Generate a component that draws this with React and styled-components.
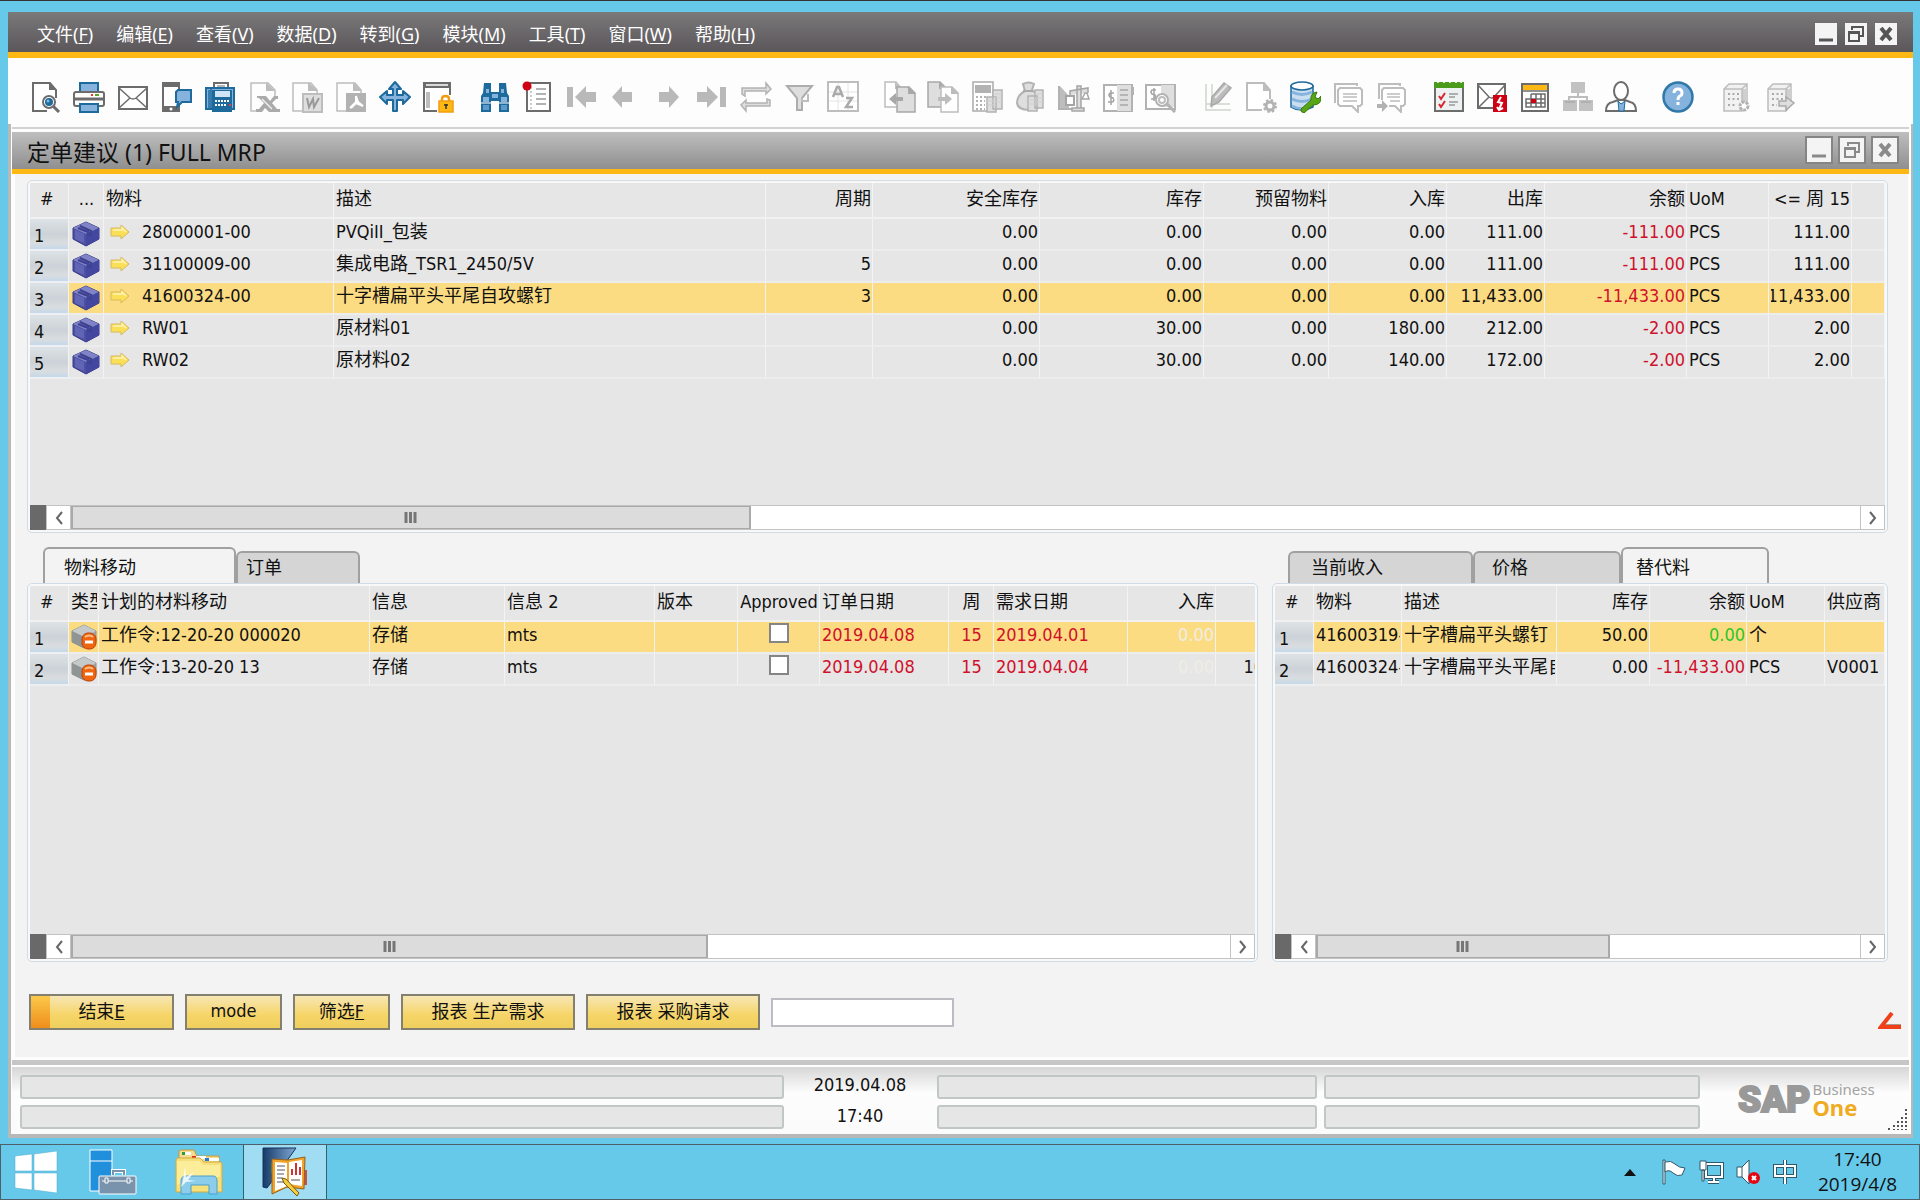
import React from "react";
import styled, { createGlobalStyle, css } from "styled-components";

const GlobalStyle = createGlobalStyle`
  * {
    box-sizing: border-box;
  }

  body {
    margin: 0;
    background: #67c9ea;
    color: #111;
    font-family: "DejaVu Sans Condensed", "Noto Sans CJK SC", sans-serif;
    font-size: 18px;
  }

  button,
  input {
    font: inherit;
    color: inherit;
  }
`;

const G = "#6c6c6c";
const L = "#bdbdbd";
const P = "#dedede";
const B = "#1d6a9c";
const S = "#86b3dd";

/* toolbar drawings, all on a 32 x 32 grid */
const icons = {
  preview: (
    <>
      <path d="M26 17V9l-6-7H3v28h14" fill="#fff" stroke={G} strokeWidth="2" />
      <path d="M19 1v8h8z" fill={G} />
      <path d="m23 25 6 6" stroke={G} strokeWidth="3" />
      <circle cx="19" cy="21" r="6" fill="#fff" stroke={G} strokeWidth="2" />
      <circle cx="19" cy="21" r="4" fill={B} />
      <circle cx="18" cy="20" r="1.5" fill={S} />
    </>
  ),
  print: (
    <>
      <path d="M7 2h18v9H7z" fill={S} stroke={B} strokeWidth="2" />
      <rect x="1" y="11" width="30" height="14" rx="2" fill="#fff" stroke={G} strokeWidth="2" />
      <path d="M2 18h28" stroke={G} strokeWidth="3" />
      <path d="M18 14h2" stroke="#e33" strokeWidth="2" />
      <path d="M22 14h4" stroke="#5a2" strokeWidth="2" />
      <path d="M7 23h18v8H7z" fill={S} stroke={B} strokeWidth="2" />
    </>
  ),
  mail: (
    <>
      <path d="M2 6h28v22H2z" fill="#fff" stroke={G} strokeWidth="2" />
      <path d="m2 7 11 10q3 2 6 0L30 7M2 27l11-10M30 27 19 17" fill="none" stroke={G} strokeWidth="1.5" />
    </>
  ),
  mobile: (
    <>
      <path d="M2 2h16v28H2z" fill="#fff" stroke={G} strokeWidth="2" />
      <path d="M1 1h18v5H1zM1 25h18v6H1z" fill={G} />
      <circle cx="10" cy="28" r="1.5" fill="#fff" />
      <path d="M17 9h13v12h-9l-5 5 1-5h-2V11z" fill={S} stroke={B} strokeWidth="2" />
    </>
  ),
  fax: (
    <>
      <path d="M10 8V2h14v6" fill="#fff" stroke={G} strokeWidth="2" />
      <path d="M13 5h8" stroke={G} />
      <path d="M2 7h28v21H2z" fill={S} stroke={B} strokeWidth="2" />
      <path d="M7 7v22M5 9v18" stroke={B} strokeWidth="1.5" />
      <path d="M8 9h20v22H8z" fill={B} />
      <path d="M11 10h15v6H11z" fill="#cfe4f5" />
      <path d="M11 20h15M11 24h11" stroke="#fff" strokeWidth="2" strokeDasharray="2 1" />
      <path d="M25 24h2" stroke="#f33" strokeWidth="2" />
    </>
  ),
  excel: (
    <>
      <path d="M27 15V9l-7-7H3v28h9" fill="none" stroke={L} strokeWidth="1.5" />
      <path d="M18 1v9h9z" fill={L} />
      <path d="M9 15h9l4 5 4-5h4v3h-2l-4 4 5 6h3v3H21l-4-4-3 4H8v-3h3l5-6-5-5H9z" fill="#aaa" />
      <path d="m14 18 10 10" stroke="#eee" strokeWidth="1.5" />
    </>
  ),
  word: (
    <>
      <path d="M26 12V9l-6-7H2v28h9" fill="none" stroke={L} strokeWidth="1.5" />
      <path d="M17 1v9h10z" fill={L} />
      <path d="M12 13h19v18H12z" fill={P} stroke={L} strokeWidth="2" />
      <path d="m16 17 2 9 4-8 1 8 5-9" fill="none" stroke="#999" strokeWidth="2" />
    </>
  ),
  pdf: (
    <>
      <path d="M26 12V9l-6-7H2v28h9" fill="none" stroke={L} strokeWidth="1.5" />
      <path d="M18 1v9h9z" fill={L} />
      <path d="M11 12h20v19H11z" fill="#b2b2b2" />
      <path d="m15 27 6-6v-6l2 6 5 4-7-3-5 5" fill="none" stroke="#fff" strokeWidth="2" />
    </>
  ),
  move: (
    <path
      d="m16 1 6 7h-4v6h6v-4l7 6-7 7v-4h-6v11h-4V19H8v4l-7-7 7-6v4h6V8h-4z"
      fill={S}
      stroke={B}
      strokeWidth="2"
      strokeLinejoin="round"
    />
  ),
  lock: (
    <>
      <path d="M2 2h26v28H2z" fill="#fff" stroke={G} strokeWidth="2" />
      <path d="M1 1h28v6H1z" fill={G} />
      <path d="M4 4h22" stroke="#fff" strokeWidth="1.5" />
      <path d="M4 11h4v16H4z" fill={L} />
      <path d="M15 14h17v18H15z" fill="#fff" />
      <path d="M20 22v-4q0-3 3.5-3t3.5 3v4" fill="none" stroke="#f39c12" strokeWidth="2.5" />
      <path d="M17 20h14v11H17z" fill="#fdb813" stroke="#f39c12" strokeWidth="1.5" />
      <path d="M22 24h4M24 23v5" stroke="#333" strokeWidth="1.5" />
    </>
  ),
  find: (
    <>
      <path d="M5 2h7v9h8V2h7l1 10 2 3v16H20V20h-8v11H2V15l2-3z" fill={B} />
      <path d="M7 8h3v4H7zM22 8h3v4h-3zM4 16h6v5H4zM22 16h6v5h-6zM13 13h6v4h-6z" fill={S} />
      <path d="M4 24h6v5H4zM22 24h6v5h-6z" fill="#5d99c9" />
      <path d="M2 22h10M20 22h10" stroke="#fff" strokeWidth="1" />
    </>
  ),
  record: (
    <>
      <path d="M5 2h23v28H5z" fill="#fff" stroke={G} strokeWidth="2" />
      <path d="M14 8h10M14 13h10M14 18h10M14 23h10" stroke="#999" strokeWidth="1.5" />
      <path d="M9 6v22" stroke="#999" strokeWidth="1" strokeDasharray="2 2" />
      <circle cx="5" cy="5" r="4.5" fill="#d00014" />
    </>
  ),
  first: <path d="M1 6h6v20H1zM9 16 20 5v6h10v10H20v6z" fill="#b9b9b9" />,
  prev: <path d="M3 16 13 5v6h10v10H13v6z" fill="#b9b9b9" />,
  next: <path d="M26 16 16 5v6H6v10h10v6z" fill="#b9b9b9" />,
  last: <path d="M23 6h6v20h-6zM21 16 10 5v6H0v10h10v6z" fill="#b9b9b9" />,
  refresh: (
    <path
      d="M2 13V7h24V2l5 6-5 5v-3H5v5zM30 19v6H6v5l-5-6 5-5v3h21v-4z"
      fill={P}
      stroke="#b3b3b3"
      strokeWidth="1.5"
    />
  ),
  filter: (
    <>
      <path d="M3 5h25L18 17v12h-5V17z" fill={P} stroke="#adadad" strokeWidth="2" />
      <path d="M18 17v3h6v-7" fill="none" stroke={L} strokeWidth="2" />
    </>
  ),
  sort: (
    <>
      <path d="M1 1h30v29H1z" fill="#fff" stroke={L} strokeWidth="2" />
      <path d="M11 2v27M21 2v27M2 11h28M2 20h28" stroke="#e4e4e4" />
      <path d="m6 16 4-10h2l4 10M8 13h6M19 17h6l-6 9h7" fill="none" stroke="#aaa" strokeWidth="2.5" />
    </>
  ),
  pageIn: (
    <>
      <path d="M1 1h11l5 6v19H1z" fill="#fff" stroke={L} strokeWidth="1.5" />
      <path d="M11 1v7h6z" fill={L} />
      <path d="M13 6h12l6 6v19H13z" fill={P} stroke="#a8a8a8" strokeWidth="1.5" />
      <path d="M24 5v8h8z" fill="#a8a8a8" />
      <path d="m5 18 7-6v4h7v4h-7v4z" fill="#a8a8a8" />
    </>
  ),
  pageOut: (
    <>
      <path d="M1 1h12l5 5v20H1z" fill={P} stroke="#a8a8a8" strokeWidth="1.5" />
      <path d="M12 1v7h7z" fill="#a8a8a8" />
      <path d="M14 6h11l6 6v19H14z" fill="#fff" stroke={L} strokeWidth="1.5" />
      <path d="M24 5v8h8z" fill={L} />
      <path d="m25 18-7-6v4h-7v4h7v4z" fill={L} />
    </>
  ),
  calc: (
    <>
      <path d="M2 1h20v29H2z" fill="#fff" stroke="#aaa" strokeWidth="1.5" />
      <path d="M4 4h16v8H4z" fill="#b2b2b2" />
      <path d="M5 16h12M5 20h9M5 24h9M5 28h9" stroke="#b2b2b2" strokeWidth="2" strokeDasharray="2 2" />
      <path d="M22 9h9v19h-9zM16 16h9v15h-9z" fill={P} stroke="#b2b2b2" strokeWidth="1.5" />
      <path d="M22 13h9M22 17h9M22 21h9M16 20h9M16 24h9" stroke="#cfcfcf" />
    </>
  ),
  money: (
    <>
      <path d="M9 3q6-3 11 0l-2 6q8 6 8 13 0 7-11 7T3 22q0-8 8-12z" fill={P} stroke="#b2b2b2" strokeWidth="2" />
      <path d="M9 10h10" stroke="#aaa" strokeWidth="2" />
      <path d="M21 9h8v18h-8zM14 15h9v15h-9z" fill={P} stroke="#b2b2b2" strokeWidth="1.5" />
      <path d="M21 13h8M21 17h8M21 21h8M14 19h9M14 23h9" stroke="#cfcfcf" />
    </>
  ),
  scale: (
    <>
      <path d="M1 5v23h15" fill="none" stroke="#b2b2b2" strokeWidth="2" />
      <path d="m2 5 9 10v12H2z" fill={L} />
      <path d="M8 15h8v9H8z" fill="#fff" stroke="#a5a5a5" strokeWidth="2" />
      <path d="M19 5h4v22h-4zM14 27h12v3H14zM12 14V10l18-3v5" fill={P} stroke="#a5a5a5" strokeWidth="1.5" />
      <path d="m27 12-3 6h7l-2-6z" fill="#fff" stroke="#a5a5a5" strokeWidth="1.5" />
    </>
  ),
  journal: (
    <>
      <path d="M2 4h28v26H2z" fill="#fff" stroke="#b2b2b2" strokeWidth="2" />
      <path d="M15 4h14v26H15z" fill={P} />
      <path d="M18 9h8M18 14h8M18 19h8M18 24h8" stroke="#a8a8a8" strokeWidth="1.5" />
      <path d="M12 12H8q-2 2 0 4l3 1q2 3-1 4H6M9 9v15" fill="none" stroke="#a5a5a5" strokeWidth="1.5" />
      <path d="M31 6v8" stroke="#b2b2b2" strokeWidth="2" />
    </>
  ),
  journalFind: (
    <>
      <path d="M1 4h29v24H1z" fill="#fff" stroke="#b2b2b2" strokeWidth="2" />
      <path d="M16 4h13v22H16z" fill={P} />
      <path d="M11 9H7q-2 2 0 4l3 1q2 3-1 4H6M9 7v13" fill="none" stroke="#a5a5a5" strokeWidth="1.5" />
      <circle cx="17" cy="19" r="6" fill="#fff" stroke="#b2b2b2" strokeWidth="2" />
      <circle cx="17" cy="19" r="3" fill="none" stroke={L} strokeWidth="2" />
      <path d="m22 23 8 8" stroke="#b2b2b2" strokeWidth="3" />
    </>
  ),
  edit: (
    <>
      <path d="M4 3v26h25M10 3v24M4 23h24" fill="none" stroke="#ccd6cc" strokeWidth="1.5" />
      <path d="m10 16 12-14 7 5-12 14-8 4z" fill="#bcbcbc" stroke="#a8a8a8" strokeWidth="1.5" />
      <path d="m13 17 12-13" stroke="#e5e5e5" strokeWidth="2" />
    </>
  ),
  docGear: (
    <>
      <path d="M25 18V9l-6-7H2v27h15" fill="#fff" stroke={L} strokeWidth="2" />
      <path d="M18 1v9h8z" fill={L} />
      <circle cx="25" cy="25" r="4" fill="none" stroke="#b2b2b2" strokeWidth="3" />
      <circle cx="25" cy="25" r="6" fill="none" stroke="#b2b2b2" strokeWidth="2" strokeDasharray="2.5 2.2" />
    </>
  ),
  database: (
    <>
      <path d="M2 5v21q10 6 22 0V5z" fill="#c9def0" stroke={B} strokeWidth="1.5" />
      <ellipse cx="13" cy="5" rx="11" ry="4" fill="#fff" stroke={B} strokeWidth="1.5" />
      <path d="M3 11q10 5 20 0M3 18q10 5 20 0M3 25q8 4 14 2" fill="none" stroke={S} strokeWidth="3" />
      <path d="m12 28 10-9q-1-7 6-8l-2 5 3 2 3-3q1 9-8 9l-9 8q-4-1-3-4z" fill="#58a618" stroke="#3c7a10" />
    </>
  ),
  chat: (
    <>
      <path d="M2 22V3h22v2" fill="none" stroke={L} strokeWidth="2" />
      <path d="M7 7h20l2 2v14l-2 2h-2v6l-6-6H7l-2-2V9z" fill="#fff" stroke={L} strokeWidth="2" />
      <path d="M10 13h14M10 16h14M10 20h14" stroke={L} strokeWidth="1.5" />
    </>
  ),
  chatArrow: (
    <>
      <path d="M3 18V3h21v2" fill="none" stroke={L} strokeWidth="2" />
      <path d="M6 19V9l2-2h19l2 2v14l-2 2h-2v6l-6-6h-6" fill="#fff" stroke={L} strokeWidth="2" />
      <path d="M11 13h13M11 16h13M14 20h10" stroke={L} strokeWidth="1.5" />
      <path d="M1 23h5v-4l6 6-6 6v-4H1z" fill="#b2b2b2" />
    </>
  ),
  checklist: (
    <>
      <path d="M2 4h28v26H2z" fill="#eef1f1" stroke={G} strokeWidth="2" />
      <path d="M1 1h30v6H1z" fill="#4a9a1c" />
      <path d="M5 0v2M11 0v2M17 0v2M23 0v2M28 0v2" stroke="#fff" strokeWidth="1.5" />
      <path d="m6 15 2 3 4-6M6 23l2 3 4-6" fill="none" stroke="#d9232e" strokeWidth="2" />
      <path d="M16 13h9M16 16h6M16 21h9M16 24h6" stroke="#999" strokeWidth="1.5" />
    </>
  ),
  mailAlert: (
    <>
      <path d="M2 3h27v24H2z" fill="#fff" stroke={G} strokeWidth="2" />
      <path d="m2 4 11 12q3 2 5 0L29 4M2 27l11-11" fill="none" stroke={G} strokeWidth="1.5" />
      <path d="M17 14h14v17H17z" fill="#d00014" />
      <path d="m25 16-3 5 4 1-3 6M21 26l2 3 4-2" fill="none" stroke="#fff" strokeWidth="2" />
    </>
  ),
  calendar: (
    <>
      <path d="M3 3h26v27H3z" fill="#fff" stroke={G} strokeWidth="2" />
      <path d="M4 4h24v5H4z" fill="#fdb813" />
      <path d="M3 10h26" stroke={G} strokeWidth="1.5" />
      <path d="M12 13h14v13H7v-8h19M12 13v13M17 13v13M22 13v13M7 22h19" fill="none" stroke={G} strokeWidth="1.5" />
      <path d="M12 18h5v4h-5z" fill="#d00014" />
    </>
  ),
  org: (
    <>
      <path d="M16 12v5M7 20v-4h18v4" fill="none" stroke={L} strokeWidth="2" />
      <path d="M9 1h14v11H9zM1 19h14v11H1zM17 19h14v11H17z" fill="#c2c2c2" />
      <path d="M3 21h10M19 21h10" stroke="#aaa" strokeWidth="1.5" />
    </>
  ),
  person: (
    <>
      <path d="M1 30q0-8 7-9l5-2h7l5 2q6 1 6 9z" fill="#fff" stroke={G} strokeWidth="2" />
      <path d="m13 20 3 3 4-3-1 10h-5z" fill={S} stroke={B} />
      <ellipse cx="16" cy="10" rx="7" ry="9" fill="#fff" stroke={G} strokeWidth="2" />
    </>
  ),
  help: (
    <>
      <circle cx="16" cy="16" r="14.5" fill={S} stroke="#2f78a8" strokeWidth="2.5" />
      <path d="M12 12q0-4 4-4t4 4q0 2-2 3-2 1-2 4M16 21v3" fill="none" stroke="#fff" strokeWidth="3" />
    </>
  ),
  server: (
    <>
      <path d="m5 8 5-5h18v20l-5 7H5z" fill="#f1f1f1" stroke={L} strokeWidth="1.5" />
      <path d="M23 8h5v15l-5 6z" fill="#cfcfcf" />
      <path d="M5 8h18l5-5M23 8v20" fill="none" stroke={L} strokeWidth="1.5" />
      <path d="M9 13h11M9 18h11M9 24h8" stroke="#aaa" strokeWidth="2" strokeDasharray="2 2.5" />
      <circle cx="25" cy="25" r="4" fill="#fff" stroke="#b2b2b2" strokeWidth="3" strokeDasharray="3 1" />
    </>
  ),
  serverArrow: (
    <>
      <path d="m5 8 5-5h18v20l-5 7H5z" fill="#f1f1f1" stroke={L} strokeWidth="1.5" />
      <path d="M23 8h5v15l-5 6z" fill="#cfcfcf" />
      <path d="M5 8h18l5-5M23 8v20" fill="none" stroke={L} strokeWidth="1.5" />
      <path d="M9 13h11M9 18h11M9 24h5" stroke="#aaa" strokeWidth="2" strokeDasharray="2 2.5" />
      <path d="M16 20h7v-4l8 6-8 7v-4h-7z" fill={P} stroke="#aaa" strokeWidth="1.5" />
    </>
  ),
};

const toolGroups = [
  { width: 436, items: ["preview", "print", "mail", "mobile", "fax", "excel", "word", "pdf", "move", "lock"] },
  { width: 392, items: ["find", "record", "first", "prev", "next", "last", "refresh", "filter", "sort"] },
  { width: 305, items: ["pageIn", "pageOut", "calc", "money", "scale", "journal", "journalFind"] },
  { width: 218, items: ["edit", "docGear", "database", "chat", "chatArrow"] },
  { width: 216, items: ["checklist", "mailAlert", "calendar", "org", "person"] },
  { width: 44, items: ["help"] },
  { width: 88, items: ["server", "serverArrow"] },
];

const menus = [
  ["文件", "F"],
  ["编辑", "E"],
  ["查看", "V"],
  ["数据", "D"],
  ["转到", "G"],
  ["模块", "M"],
  ["工具", "T"],
  ["窗口", "W"],
  ["帮助", "H"],
];

const BoxIcon = () => (
  <svg width="28" height="26" viewBox="0 0 28 26">
    <path d="m14 1 13 6v11l-13 7-13-7V7z" fill="#4d50a0" stroke="#383a80" />
    <path d="m14 1 13 6-13 6L1 7z" fill="#7f83c8" />
    <path d="M14 13v12l13-7V7z" fill="#4347a0" />
    <path d="m3 9 9 4v9l-9-4z" fill="#6165b8" />
    <path d="m8 5 11 5v4l-3-1v-2L6 7" fill="none" stroke="#3e4190" strokeWidth="2" />
  </svg>
);

const LinkArrow = () => (
  <svg width="20" height="16" viewBox="0 0 20 16">
    <path d="M1 4h10V1l8 7-8 7v-3H1z" fill="#fbdf57" stroke="#d8b95c" strokeLinejoin="round" />
    <path d="M3 6h9V4l4 4" fill="none" stroke="#fff4b5" strokeWidth="1.5" />
  </svg>
);

const OrderIcon = () => (
  <svg width="26" height="26" viewBox="0 0 26 26">
    <path d="m13 1 12 6v11l-12 6-12-6V7z" fill="#a4a8a8" stroke="#8b8f8f" />
    <path d="m13 1 12 6-12 6L1 7z" fill="#c5c9c9" />
    <path d="M13 13v11L1 18V7z" fill="#8f9595" />
    <rect x="11" y="9" width="14" height="16" rx="6" fill="#f0650f" stroke="#b9430a" />
    <path d="M14 13q4-3 8 0" fill="none" stroke="#ffc08a" strokeWidth="2" />
    <path d="M14 18h8" stroke="#fff" strokeWidth="3" />
  </svg>
);

const ItemCode = ({ code }) => (
  <ItemLink>
    <LinkArrow />
    {code}
  </ItemLink>
);

const CheckBox = ({ label }) => <Check type="checkbox" aria-label={label} />;

const Positive = ({ children }) => <Green>{children}</Green>;

const Grid = ({ columns, rows, selected }) => (
  <Table>
    <colgroup>
      {columns.map((col, i) => (
        <Col key={i} $width={col.width} />
      ))}
    </colgroup>
    <thead>
      <tr>
        {columns.map((col, i) => (
          <HeadCell key={i} scope="col" $number={i === 0}>
            <CellText $align={col.headAlign || col.align}>{col.title}</CellText>
          </HeadCell>
        ))}
      </tr>
    </thead>
    <tbody>
      {rows.map((row, r) => (
        <Row key={r} $selected={selected === r}>
          <RowNumber scope="row">{r + 1}</RowNumber>
          {row.map((value, c) => {
            const col = columns[c + 1];
            return (
              <Cell key={c} $icon={col.icon}>
                <CellText
                  $align={col.align}
                  $tone={col.tone || (String(value).startsWith("-") ? "red" : undefined)}
                >
                  {value}
                </CellText>
              </Cell>
            );
          })}
        </Row>
      ))}
    </tbody>
  </Table>
);

const ScrollBar = ({ size }) => (
  <Scroll>
    <ScrollSplit />
    <ScrollButton type="button" aria-label="向左">
      <svg width="8" height="14" viewBox="0 0 8 14">
        <path d="M7 1 2 7l5 6" fill="none" stroke="#666" strokeWidth="2" />
      </svg>
    </ScrollButton>
    <ScrollTrack>
      <ScrollThumb $size={size}>
        <svg width="13" height="11" viewBox="0 0 13 11">
          <path d="M2 0v11M6.5 0v11M11 0v11" stroke="#777" strokeWidth="3" />
        </svg>
      </ScrollThumb>
    </ScrollTrack>
    <ScrollButton type="button" aria-label="向右">
      <svg width="8" height="14" viewBox="0 0 8 14">
        <path d="m1 1 5 6-5 6" fill="none" stroke="#666" strokeWidth="2" />
      </svg>
    </ScrollButton>
  </Scroll>
);

const WindowButtons = ({ large }) => (
  <WinButtons $large={large}>
    <WinButton type="button" aria-label="最小化" $large={large}>
      <svg width="18" height="18" viewBox="0 0 18 18">
        <path d="M2 15h14" stroke="currentColor" strokeWidth="3" />
      </svg>
    </WinButton>
    <WinButton type="button" aria-label="还原" $large={large}>
      <svg width="18" height="18" viewBox="0 0 18 18">
        <path d="M5 5V2h11v9h-3M2 7h10v9H2zM2 8h10" fill="none" stroke="currentColor" strokeWidth="2" />
      </svg>
    </WinButton>
    <WinButton type="button" aria-label="关闭" $large={large}>
      <svg width="18" height="18" viewBox="0 0 18 18">
        <path d="m4 3 10 12M14 3 4 15" stroke="currentColor" strokeWidth="4" />
      </svg>
    </WinButton>
  </WinButtons>
);

const itemColumns = [
  { title: "#", width: 39 },
  { title: "...", width: 35, align: "center", icon: true },
  { title: "物料", width: 230 },
  { title: "描述", width: 432 },
  { title: "周期", width: 107, align: "right" },
  { title: "安全库存", width: 167, align: "right" },
  { title: "库存", width: 164, align: "right" },
  { title: "预留物料", width: 125, align: "right" },
  { title: "入库", width: 118, align: "right" },
  { title: "出库", width: 98, align: "right" },
  { title: "余额", width: 142, align: "right" },
  { title: "UoM", width: 82 },
  { title: "<= 周 15", width: 83, align: "right" },
  { title: "" },
];

const itemData = [
  ["28000001-00", "PVQiII_包装", "", "0.00", "0.00", "0.00", "0.00", "111.00", "-111.00", "PCS", "111.00"],
  ["31100009-00", "集成电路_TSR1_2450/5V", "5", "0.00", "0.00", "0.00", "0.00", "111.00", "-111.00", "PCS", "111.00"],
  ["41600324-00", "十字槽扁平头平尾自攻螺钉", "3", "0.00", "0.00", "0.00", "0.00", "11,433.00", "-11,433.00", "PCS", "11,433.00"],
  ["RW01", "原材料01", "", "0.00", "30.00", "0.00", "180.00", "212.00", "-2.00", "PCS", "2.00"],
  ["RW02", "原材料02", "", "0.00", "30.00", "0.00", "140.00", "172.00", "-2.00", "PCS", "2.00"],
];

const itemRows = itemData.map(([code, ...rest]) => [<BoxIcon />, <ItemCode code={code} />, ...rest, ""]);

const moveColumns = [
  { title: "#", width: 39 },
  { title: "类型", width: 30, headAlign: "left", align: "center", icon: true },
  { title: "计划的材料移动", width: 271 },
  { title: "信息", width: 135 },
  { title: "信息 2", width: 150 },
  { title: "版本", width: 83 },
  { title: "Approved", width: 82, align: "center", icon: true },
  { title: "订单日期", width: 129, tone: "red" },
  { title: "周", width: 45, align: "center", tone: "red" },
  { title: "需求日期", width: 134, tone: "red" },
  { title: "入库", width: 88, align: "right", tone: "faint" },
  { title: "", width: 50, align: "right" },
];

const moveRows = [
  [<OrderIcon />, "工作令:12-20-20 000020", "存储", "mts", "", <CheckBox label="Approved 1" />, "2019.04.08", "15", "2019.04.01", "0.00", ""],
  [<OrderIcon />, "工作令:13-20-20 13", "存储", "mts", "", <CheckBox label="Approved 2" />, "2019.04.08", "15", "2019.04.04", "0.00", "10"],
];

const altColumns = [
  { title: "#", width: 39 },
  { title: "物料", width: 88 },
  { title: "描述", width: 155 },
  { title: "库存", width: 93, align: "right" },
  { title: "余额", width: 97, align: "right" },
  { title: "UoM", width: 78 },
  { title: "供应商" },
];

const altRows = [
  ["41600319-00", "十字槽扁平头螺钉", "50.00", <Positive>0.00</Positive>, "个", ""],
  ["41600324-00", "十字槽扁平头平尾自攻螺钉", "0.00", "-11,433.00", "PCS", "V0001"],
];

const App = () => {
  return (
    <Desktop>
      <GlobalStyle />
      <AppWindow>
        <MenuBar>
          <Menus>
            {menus.map(([name, key]) => (
              <MenuButton type="button" key={key}>
                {name}(<u>{key}</u>)
              </MenuButton>
            ))}
          </Menus>
          <WindowButtons />
        </MenuBar>
        <ToolBar>
          {toolGroups.map((group, i) => (
            <ToolGroup key={i} $width={group.width}>
              {group.items.map((name) => (
                <ToolButton type="button" key={name} aria-label={name}>
                  <svg width="32" height="32" viewBox="0 0 32 32">
                    {icons[name]}
                  </svg>
                </ToolButton>
              ))}
            </ToolGroup>
          ))}
        </ToolBar>
        <WorkArea>
          <FormTitle>
            <h1>定单建议 (1) FULL MRP</h1>
            <WindowButtons large />
          </FormTitle>
          <Form>
            <TopPanel>
              <PanelBody>
                <Grid columns={itemColumns} rows={itemRows} selected={2} />
              </PanelBody>
              <ScrollBar size={38} />
            </TopPanel>
            <Lower>
              <Movements>
                <Tabs role="tablist">
                  <Tab type="button" role="tab" $active $width={193} $pad={19}>
                    物料移动
                  </Tab>
                  <Tab type="button" role="tab" $width={124} $pad={8}>
                    订单
                  </Tab>
                </Tabs>
                <Panel>
                  <PanelBody>
                    <Grid columns={moveColumns} rows={moveRows} selected={0} />
                  </PanelBody>
                  <ScrollBar size={55} />
                </Panel>
              </Movements>
              <Alternatives>
                <Tabs role="tablist">
                  <Tab type="button" role="tab" $width={185} $pad={21}>
                    当前收入
                  </Tab>
                  <Tab type="button" role="tab" $width={148} $pad={17}>
                    价格
                  </Tab>
                  <Tab type="button" role="tab" $active $width={148} $pad={13}>
                    替代料
                  </Tab>
                </Tabs>
                <Panel>
                  <PanelBody>
                    <Grid columns={altColumns} rows={altRows} selected={0} />
                  </PanelBody>
                  <ScrollBar size={54} />
                </Panel>
              </Alternatives>
            </Lower>
            <Actions>
              <ActionButton type="button" $width={145} $primary>
                结束<u>E</u>
              </ActionButton>
              <ActionButton type="button" $width={97}>
                mode
              </ActionButton>
              <ActionButton type="button" $width={97}>
                筛选<u>F</u>
              </ActionButton>
              <ActionButton type="button" $width={174}>
                报表 生产需求
              </ActionButton>
              <ActionButton type="button" $width={174}>
                报表 采购请求
              </ActionButton>
              <SearchBox type="text" aria-label="筛选" />
              <Corner width="24" height="18" viewBox="0 0 24 18">
                <path d="M7 13h16" stroke="#a89a8c" strokeWidth="2" />
                <path d="M14 1 3 15h20" fill="none" stroke="#f0401a" strokeWidth="4" />
              </Corner>
            </Actions>
          </Form>
          <StatusBar>
            <StatusStack $grow={763}>
              <StatusField />
              <StatusField />
            </StatusStack>
            <StatusClock>
              <span>2019.04.08</span>
              <span>17:40</span>
            </StatusClock>
            <StatusStack $grow={380}>
              <StatusField />
              <StatusField />
            </StatusStack>
            <StatusStack $grow={376} $spaced>
              <StatusField />
              <StatusField />
            </StatusStack>
            <Brand>
              <Sap>SAP</Sap>
              <Product>
                <span>Business</span>
                <b>One</b>
              </Product>
              <SizeGrip width="20" height="22" viewBox="0 0 20 22">
                <path
                  d="M19 1v21M15 9v13M11 13v9M7 17v5M2 20v2"
                  stroke="#555"
                  strokeWidth="2"
                  strokeDasharray="2 2"
                />
              </SizeGrip>
            </Brand>
          </StatusBar>
        </WorkArea>
      </AppWindow>
      <TaskBar>
        <TaskButton type="button" aria-label="开始" $width={70}>
          <svg width="44" height="44" viewBox="0 0 44 44">
            <path d="M1 6l17-2v17H1zM20 4l23-3v20H20zM1 23h17v17L1 38zM20 23h23v20l-23-3z" fill="#fff" stroke="#4ea9cc" strokeWidth="0.5" />
          </svg>
        </TaskButton>
        <TaskButton type="button" aria-label="服务器管理器" $width={84}>
          <svg width="48" height="46" viewBox="0 0 48 46">
            <path d="M1 1h22v41H1z" fill="#2090dc" stroke="#fff" />
            <path d="M1 12h22" stroke="#fff" />
            <path d="M24 26v-4h11v4" fill="none" stroke="#fff" strokeWidth="4" />
            <path d="M24 26v-4h11v4" fill="none" stroke="#7893ab" strokeWidth="2" />
            <rect x="10" y="27" width="37" height="18" rx="1" fill="#7893ab" stroke="#fff" />
            <path d="M13 32h31" stroke="#fff" />
            <path d="M16 29h3v5h-3zM38 29h3v5h-3z" fill="#7893ab" stroke="#fff" />
          </svg>
        </TaskButton>
        <TaskButton type="button" aria-label="文件资源管理器" $width={88}>
          <svg width="48" height="46" viewBox="0 0 48 46">
            <path d="M4 8V2l2-1h13l3 6h22v10H4z" fill="#f4dc8c" stroke="#c39b3b" />
            <path d="M7 3h9v3H7zM17 7h14v3H17z" fill="#fff" />
            <path d="M7 3h3v3H7z" fill="#2c9c3c" />
            <path d="M17 7h4v3h-4z" fill="#e02c1c" />
            <path d="M1 11q0-2 2-2h22l4 4h16q2 0 2 2v28H1z" fill="#f6e07c" stroke="#d2aa43" />
            <path d="M30 9h14v3H30z" fill="#fff" />
            <path d="M30 9h4v3h-4z" fill="#2a7bd0" />
            <path d="M2 12h22l4 4h17v12q-20-1-43 8z" fill="#fff2a6" opacity=".7" />
            <path d="M6 45V32q0-5 5-5h27q4 0 4 5v13h-8v-9H16v9z" fill="#8dcdec" stroke="#4c9fca" />
            <path d="m10 17 1 11 8-5-6 8 8 1-10 1-5 5 2-7z" fill="#fff" opacity=".8" />
          </svg>
        </TaskButton>
        <TaskButton type="button" aria-label="SAP Business One" $width={84} $active>
          <svg width="48" height="50" viewBox="0 0 48 50">
            <defs>
              <linearGradient id="book" x1="0" y1="0" x2="1" y2="0">
                <stop offset="0" stopColor="#173a68" />
                <stop offset="1" stopColor="#7fa9d6" />
              </linearGradient>
            </defs>
            <path d="M2 1h33L18 25 6 41l-4-1z" fill="url(#book)" stroke="#143055" />
            <path d="M10 16h4v10h-4z" fill="#2f9b55" />
            <path d="M41 23h5v15h-5z" fill="#c7504b" />
            <path d="m11 12 16 1 17-3-1 32-17-2-15 7z" fill="#f0a42a" stroke="#95611c" />
            <path d="m14 15 12 1v23l-12 5zM28 15l13-2v26l-13-2z" fill="#fff" />
            <path d="M16 19h8M16 23h8M16 27h7M16 31h5M16 35h8" stroke="#556" />
            <path d="M31 28v-6M35 28V16M39 28v-8" stroke="#c33" strokeWidth="2" />
            <path d="M30 33h9" stroke="#555" />
            <path d="m21 31 4 1 13 14-2 3-13-13z" fill="#f5cb3c" stroke="#755716" />
          </svg>
        </TaskButton>
        <Tray>
          <svg width="12" height="8" viewBox="0 0 12 8">
            <path d="M0 8 6 1l6 7z" fill="#111" />
          </svg>
          <svg width="26" height="26" viewBox="0 0 26 26">
            <path d="M2 1h2v24H2z" fill="#fff" stroke="#31586a" />
            <path d="M4 3q6-2 10 2t10 4l-3 7q-5 2-9-2t-8-1z" fill="#fff" stroke="#31586a" />
          </svg>
          <svg width="26" height="26" viewBox="0 0 26 26">
            <path d="M8 5h16v13H8zM16 18v5M10 23h11" fill="none" stroke="#31586a" strokeWidth="4" />
            <path d="M8 5h16v13H8zM16 18v5M10 23h11" fill="none" stroke="#fff" strokeWidth="2" />
            <path d="M2 2h6v9H2zM4 11h2v11H4z" fill="#fff" stroke="#31586a" />
          </svg>
          <svg width="26" height="26" viewBox="0 0 26 26">
            <path d="M2 8h5l7-7v24l-7-7H2z" fill="#fff" stroke="#31586a" />
            <path d="M7 8v10" stroke="#31586a" />
            <circle cx="19" cy="19" r="6" fill="#e30613" />
            <path d="m17 17 4 4m0-4-4 4" stroke="#fff" strokeWidth="2" />
          </svg>
          <svg width="26" height="26" viewBox="0 0 26 26">
            <path d="M3 7h20v10H3zM13 1v24" fill="none" stroke="#31586a" strokeWidth="4" />
            <path d="M3 7h20v10H3zM13 1v24" fill="none" stroke="#fff" strokeWidth="2" />
          </svg>
          <TrayClock>
            <span>17:40</span>
            <span>2019/4/8</span>
          </TrayClock>
        </Tray>
      </TaskBar>
    </Desktop>
  );
};

const Desktop = styled.div`
  min-height: 100vh;
  display: flex;
  flex-direction: column;
  border-top: 1px solid #333;
  background: #67c9ea;
`;

const AppWindow = styled.main`
  flex: 1;
  display: flex;
  flex-direction: column;
  margin: 11px 7px 6px 8px;
`;

const MenuBar = styled.header`
  height: 46px;
  display: flex;
  align-items: center;
  justify-content: space-between;
  padding: 4px 16px 0 29px;
  background: linear-gradient(#7b797a, #5a565a);
  border-bottom: 6px solid #fdb813;
`;

const Menus = styled.nav`
  display: flex;
  gap: 23px;
`;

const MenuButton = styled.button`
  padding: 0;
  border: 0;
  background: none;
  color: #fff;
  font-family: "Noto Sans", "Noto Sans CJK SC", sans-serif;
  line-height: 26px;
  white-space: nowrap;

  u {
    text-underline-offset: 2px;
  }
`;

const WinButtons = styled.div`
  display: flex;
  gap: ${({ $large }) => ($large ? 5 : 8)}px;
`;

const WinButton = styled.button`
  width: 22px;
  height: 22px;
  display: flex;
  align-items: center;
  justify-content: center;
  padding: 0;
  border: 0;
  background: #f4f4f4;
  color: #555;

  ${({ $large }) =>
    $large &&
    css`
      width: 28px;
      height: 28px;
      border: 2px solid #858585;
      color: #8a8a8a;
    `}
`;

const ToolBar = styled.div`
  height: 66px;
  display: flex;
  align-items: center;
  gap: 13px;
  padding: 12px 16px 0;
  background: #fdfdfd;
`;

const ToolGroup = styled.div`
  display: grid;
  grid-auto-flow: column;
  grid-auto-columns: 1fr;
  flex: 0 1 ${({ $width }) => $width}px;
`;

const ToolButton = styled.button`
  height: 32px;
  display: flex;
  justify-content: center;
  padding: 0;
  border: 0;
  background: none;
`;

const WorkArea = styled.div`
  flex: 1;
  display: flex;
  flex-direction: column;
  padding: 3px 2px 0 1px;
  background: #fdfdfd;
  border: solid #b8b8b8;
  border-width: 0 2px 4px 3px;
`;

const FormTitle = styled.div`
  height: 47px;
  display: flex;
  align-items: center;
  justify-content: space-between;
  padding: 2px 10px 0 15px;
  border-top: 2px solid #d2d2d2;
  border-bottom: 5px solid #fdb813;
  background: linear-gradient(#fdfdfd 0, #fdfdfd 3px, #bebebe 3px, #8f8f8f);

  h1 {
    margin: 0;
    padding-top: 4px;
    font-family: "Noto Sans", "Noto Sans CJK SC", sans-serif;
    font-size: 23px;
    font-weight: 400;
    line-height: 34px;
  }
`;

const Form = styled.section`
  flex: 1;
  display: flex;
  flex-direction: column;
  margin: 0 1px 3px 3px;
  padding: 6px 20px 27px 12px;
  background: #f3f3f3;
`;

const Panel = styled.div`
  flex: 1;
  min-width: 0;
  display: flex;
  flex-direction: column;
  padding: 2px;
  border: 1px solid #cfdce6;
  border-radius: 5px;
  background: #f8f8f8;
`;

const TopPanel = styled(Panel)`
  flex: 350 1 0;
`;

const PanelBody = styled.div`
  flex: 1;
  overflow: hidden;
  background: #e6e6e6;
`;

const Lower = styled.div`
  flex: 418 1 0;
  display: flex;
  gap: 14px;
  margin-top: 14px;
`;

const Movements = styled.div`
  flex: 1231 1 0;
  min-width: 0;
  display: flex;
  flex-direction: column;
`;

const Alternatives = styled(Movements)`
  flex: 616 1 0;
`;

const Tabs = styled.div`
  height: 36px;
  display: flex;
  align-items: flex-end;
  padding-left: 16px;
`;

const Tab = styled.button`
  width: ${({ $width }) => $width}px;
  height: ${({ $active }) => ($active ? 36 : 32)}px;
  padding: 0 0 ${({ $active }) => ($active ? 0 : 4)}px ${({ $pad }) => $pad}px;
  border: 2px solid #a0a0a0;
  border-bottom: 0;
  border-radius: 6px 6px 0 0;
  background: ${({ $active }) => ($active ? "#f3f3f3" : "#d5d5d5")};
  text-align: left;
  white-space: nowrap;
`;

const Table = styled.table`
  width: 100%;
  table-layout: fixed;
  border-collapse: separate;
  border-spacing: 0;
`;

const Col = styled.col`
  width: ${({ $width }) => ($width ? $width + "px" : "auto")};
`;

const HeadCell = styled.th`
  height: 36px;
  padding: 0 1px 3px ${({ $number }) => ($number ? 10 : 2)}px;
  border-right: 1px solid #f3f3f3;
  border-bottom: 2px solid #f1f1f1;
  font-weight: 400;
`;

const RowNumber = styled.th`
  height: 32px;
  padding: 3px 0 0 4px;
  border-right: 1px solid #f3f3f3;
  border-bottom: 2px solid #edf0f3;
  background: linear-gradient(#dde2e6, #cdd2d8 50%, #d9dde0 80%, #c6d8e9);
  font-weight: 400;
  line-height: 24px;
  text-align: left;
`;

const Cell = styled.td`
  height: 32px;
  padding: ${({ $icon }) => ($icon ? "0" : "0 1px 5px 2px")};
  border-right: 1px solid #f3f3f3;
  border-bottom: 2px solid #ededed;
`;

const Row = styled.tr`
  ${Cell} {
    background: ${({ $selected }) => ($selected ? "#fcdc82" : "#e6e6e6")};
  }
`;

const tones = { red: "#d0112b", faint: "#f0ede4" };

const aligns = { right: "flex-end", center: "center" };

const CellText = styled.div`
  display: flex;
  align-items: center;
  justify-content: ${({ $align }) => aligns[$align] || "flex-start"};
  overflow: hidden;
  white-space: pre;
  line-height: 24px;
  color: ${({ $tone }) => tones[$tone] || "inherit"};
`;

const ItemLink = styled.span`
  display: flex;
  align-items: center;
  gap: 12px;
  padding-left: 4px;
`;

const Green = styled.span`
  color: #2cc52c;
`;

const Check = styled.input`
  appearance: none;
  width: 20px;
  height: 20px;
  margin: 0 0 8px;
  border: 2px solid #858585;
  background: #fff;
`;

const Scroll = styled.div`
  height: 25px;
  display: flex;
`;

const ScrollSplit = styled.div`
  width: 16px;
  background: #696969;
`;

const ScrollButton = styled.button`
  width: 25px;
  display: flex;
  align-items: center;
  justify-content: center;
  padding: 0;
  border: 1px solid #c3c3c3;
  background: #fff;
`;

const ScrollTrack = styled.div`
  flex: 1;
  border: solid #c3c3c3;
  border-width: 1px 0;
  background: #fff;
`;

const ScrollThumb = styled.div`
  width: ${({ $size }) => $size}%;
  height: 100%;
  display: flex;
  align-items: center;
  justify-content: center;
  border: solid #a9a9a9;
  border-width: 1px 2px;
  background: #dcdcdc;
`;

const Actions = styled.div`
  display: flex;
  align-items: center;
  gap: 11px;
  margin: 32px -14px 0 2px;
`;

const ActionButton = styled.button`
  width: ${({ $width }) => $width}px;
  height: 36px;
  padding: 0 0 4px;
  border: 2px solid #83806f;
  background: ${({ $primary }) =>
    $primary
      ? "linear-gradient(#fbc94a, #ef8d1a) left / 19px 100% no-repeat, linear-gradient(#f7e6b4, #f6d568 60%, #efcf5c)"
      : "linear-gradient(#f7e6b4, #f6d568 60%, #efcf5c)"};
  white-space: nowrap;
`;

const SearchBox = styled.input`
  width: 183px;
  height: 29px;
  padding: 0 4px;
  border: 2px solid #bcbcc2;
  background: #fff;
`;

const Corner = styled.svg`
  margin-left: auto;
  align-self: flex-end;
`;

const StatusBar = styled.footer`
  height: 74px;
  display: flex;
  padding: 10px 0 0 8px;
  border-top: 5px solid #c6c6c6;
  background: linear-gradient(#fff 0, #fff 2px, #d6d6d6 2px, #fdfdfd 28px, #fbfbfb);
`;

const StatusStack = styled.div`
  flex: ${({ $grow }) => $grow} 1 0;
  display: grid;
  grid-template-rows: 24px 24px;
  gap: 6px;
  margin-left: ${({ $spaced }) => ($spaced ? 7 : 0)}px;
`;

const StatusField = styled.div`
  border: 2px solid #c1c6c6;
  border-radius: 3px;
  background: #e6e6e6;
`;

const StatusClock = styled.div`
  width: 153px;
  display: grid;
  grid-template-rows: 22px 22px;
  row-gap: 9px;
  line-height: 20px;
  text-align: center;
`;

const Brand = styled.div`
  position: relative;
  width: 209px;
  display: flex;
  gap: 2px;
  padding: 4px 0 0 38px;
`;

const Sap = styled.span`
  color: #999;
  font-family: Roboto, sans-serif;
  font-size: 37px;
  font-weight: 900;
  line-height: 42px;
  -webkit-text-stroke: 2px #999;
`;

const Product = styled.span`
  display: flex;
  flex-direction: column;
  padding-top: 1px;
  color: #a3a3a3;
  font-family: "Noto Sans", sans-serif;
  font-size: 15px;
  line-height: 18px;

  b {
    color: #f0ab1f;
    font-size: 22px;
  }
`;

const SizeGrip = styled.svg`
  position: absolute;
  right: 2px;
  bottom: 4px;
`;

const TaskBar = styled.footer`
  height: 56px;
  display: flex;
  border: 1px solid #50606a;
`;

const TaskButton = styled.button`
  width: ${({ $width }) => $width}px;
  display: flex;
  align-items: center;
  justify-content: center;
  padding: 0;
  border: solid ${({ $active }) => ($active ? "#33606f" : "transparent")};
  border-width: 0 1px;
  background: ${({ $active }) => ($active ? "#a0ddf2" : "none")};
`;

const Tray = styled.div`
  display: flex;
  align-items: center;
  gap: 11px;
  margin-left: auto;
  padding-right: 22px;

  svg:first-child {
    margin-right: 14px;
  }
`;

const TrayClock = styled.div`
  display: flex;
  flex-direction: column;
  padding-left: 9px;
  font-family: "Open Sans", sans-serif;
  font-size: 19px;
  line-height: 25px;
  text-align: center;
`;

export default App;
